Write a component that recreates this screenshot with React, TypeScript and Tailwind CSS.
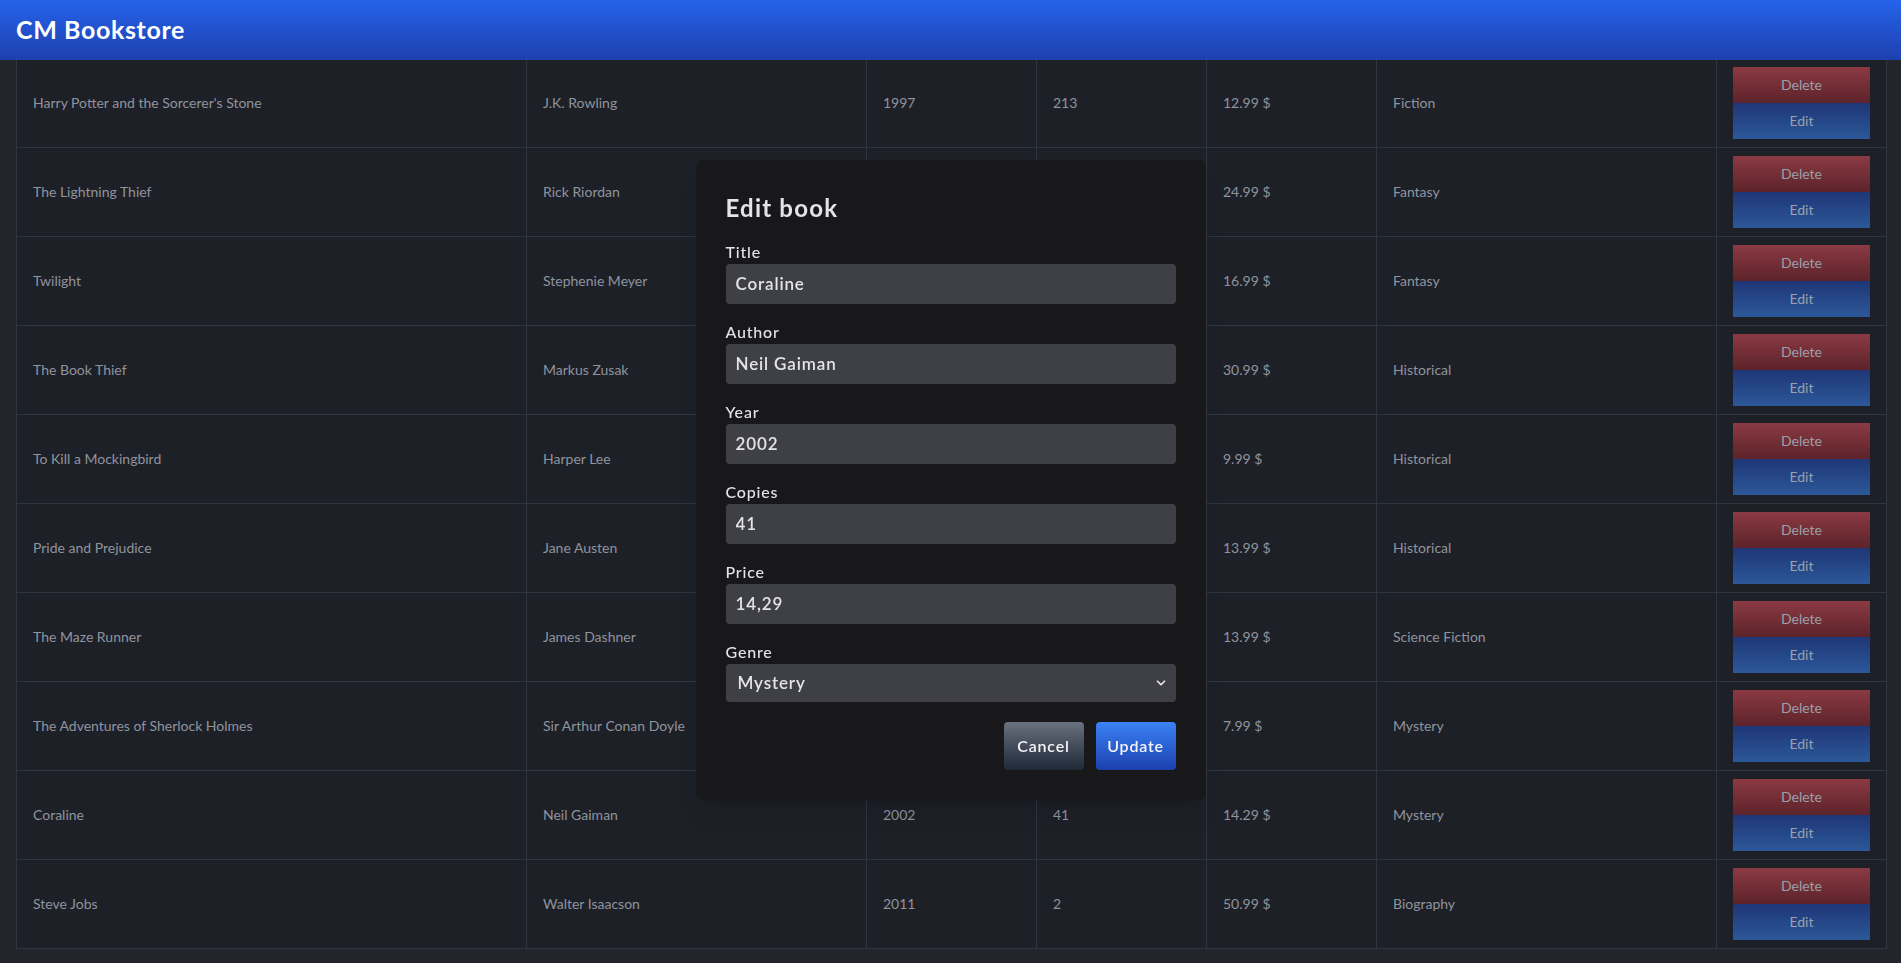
import React, { useState } from "react";
import { ChevronDown } from "lucide-react";

type Book = {
  title: string;
  author: string;
  year: number;
  copies: number;
  price: string;
  genre: string;
};

const books: Book[] = [
  { title: "Harry Potter and the Sorcerer's Stone", author: "J.K. Rowling", year: 1997, copies: 213, price: "12.99", genre: "Fiction" },
  { title: "The Lightning Thief", author: "Rick Riordan", year: 2005, copies: 87, price: "24.99", genre: "Fantasy" },
  { title: "Twilight", author: "Stephenie Meyer", year: 2005, copies: 64, price: "16.99", genre: "Fantasy" },
  { title: "The Book Thief", author: "Markus Zusak", year: 2005, copies: 35, price: "30.99", genre: "Historical" },
  { title: "To Kill a Mockingbird", author: "Harper Lee", year: 1960, copies: 120, price: "9.99", genre: "Historical" },
  { title: "Pride and Prejudice", author: "Jane Austen", year: 1813, copies: 58, price: "13.99", genre: "Historical" },
  { title: "The Maze Runner", author: "James Dashner", year: 2009, copies: 22, price: "13.99", genre: "Science Fiction" },
  { title: "The Adventures of Sherlock Holmes", author: "Sir Arthur Conan Doyle", year: 1892, copies: 17, price: "7.99", genre: "Mystery" },
  { title: "Coraline", author: "Neil Gaiman", year: 2002, copies: 41, price: "14.29", genre: "Mystery" },
  { title: "Steve Jobs", author: "Walter Isaacson", year: 2011, copies: 2, price: "50.99", genre: "Biography" },
];

const genres = ["Fiction", "Fantasy", "Historical", "Science Fiction", "Mystery", "Biography"];

const Field = ({ label, value, onChange }: { label: string; value: string; onChange: (v: string) => void }) => (
  <div className="mb-4 flex flex-col">
    <label className="h-6 text-base leading-6 font-medium tracking-wider text-[#e4e4e7]">{label}</label>
    <input
      value={value}
      onChange={(e) => onChange(e.target.value)}
      className="h-10 w-full rounded bg-[#3f3f46] px-2.5 text-[17px] font-semibold tracking-wider text-[#e4e4e7] outline-none"
    />
  </div>
);

export default function App() {
  const [form, setForm] = useState({
    title: "Coraline",
    author: "Neil Gaiman",
    year: "2002",
    copies: "41",
    price: "14,29",
    genre: "Mystery",
  });
  const set = (k: keyof typeof form) => (v: string) => setForm({ ...form, [k]: v });

  return (
    <div className="h-[963px] overflow-hidden bg-[#22252b] font-['Lato','Inter',sans-serif]">
      {/* Header */}
      <header className="fixed inset-x-0 top-0 z-10 flex h-[60px] items-center bg-linear-to-b from-[#2563eb] to-[#1e40af] px-4">
        <h1 className="text-[25px] font-bold tracking-wide text-white">CM Bookstore</h1>
      </header>

      {/* Books table */}
      <main className="pt-[58px] pr-[15px] pl-4">
        <table className="w-full table-fixed border-collapse bg-[#1e2028] text-sm text-[#8f949d]">
          <colgroup>
            <col className="w-[510px]" />
            <col className="w-[340px]" />
            <col className="w-[170px]" />
            <col className="w-[170px]" />
            <col className="w-[170px]" />
            <col className="w-[340px]" />
            <col className="w-[170px]" />
          </colgroup>
          <tbody>
            {books.map((b) => (
              <tr key={b.title}>
                <td className="border border-[#30363f] px-4">{b.title}</td>
                <td className="border border-[#30363f] px-4">{b.author}</td>
                <td className="border border-[#30363f] px-4">{b.year}</td>
                <td className="border border-[#30363f] px-4">{b.copies}</td>
                <td className="border border-[#30363f] px-4">{b.price} $</td>
                <td className="border border-[#30363f] px-4">{b.genre}</td>
                <td className="border border-[#30363f] px-4 py-2">
                  <button className="block h-9 w-full bg-linear-to-b from-[#8b3a43] to-[#5d232a] text-sm text-[#9ba0aa]">
                    Delete
                  </button>
                  <button className="block h-9 w-full bg-linear-to-b from-[#1f3677] to-[#2c5899] text-sm text-[#9ba0aa]">
                    Edit
                  </button>
                </td>
              </tr>
            ))}
          </tbody>
        </table>
      </main>

      {/* Edit modal */}
      <div className="fixed inset-0 z-20 flex items-center justify-center pb-1">
        <div className="w-[510px] rounded-lg bg-[#18181b] px-[30px] pt-8 pb-[30px] shadow-xl">
          <h2 className="mb-4 h-8 text-2xl leading-8 font-bold tracking-wider text-[#e4e4e7]">Edit book</h2>
          <Field label="Title" value={form.title} onChange={set("title")} />
          <Field label="Author" value={form.author} onChange={set("author")} />
          <Field label="Year" value={form.year} onChange={set("year")} />
          <Field label="Copies" value={form.copies} onChange={set("copies")} />
          <Field label="Price" value={form.price} onChange={set("price")} />
          <div className="flex flex-col">
            <label className="h-6 text-base leading-6 font-medium tracking-wider text-[#e4e4e7]">Genre</label>
            <div className="relative">
              <select
                value={form.genre}
                onChange={(e) => set("genre")(e.target.value)}
                className="h-[38px] w-full appearance-none rounded bg-[#3f3f46] px-3 text-[17px] font-semibold tracking-wider text-[#e4e4e7] outline-none"
              >
                {genres.map((g) => (
                  <option key={g}>{g}</option>
                ))}
              </select>
              <ChevronDown className="pointer-events-none absolute top-1/2 right-2 h-3.5 w-3.5 -translate-y-1/2 text-[#e4e4e7]" strokeWidth={3} />
            </div>
          </div>
          <div className="mt-5 flex justify-end gap-3">
            <button className="h-12 w-20 rounded bg-linear-to-b from-[#6b7280] to-[#1f2937] text-base font-semibold tracking-wider text-[#f4f4f5]">
              Cancel
            </button>
            <button className="h-12 w-20 rounded bg-linear-to-b from-[#3b82f6] to-[#1e40af] text-base font-semibold tracking-wider text-[#f4f4f5]">
              Update
            </button>
          </div>
        </div>
      </div>
    </div>
  );
}
